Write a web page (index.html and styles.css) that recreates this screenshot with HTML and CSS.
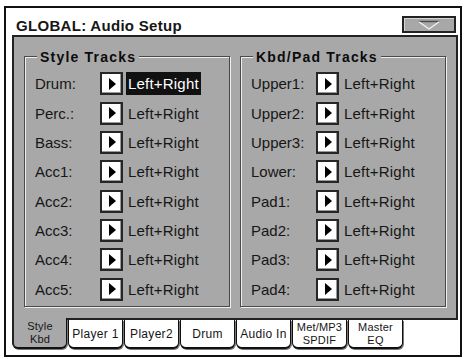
FILE: index.html
```html
<!DOCTYPE html>
<html lang="en">
<head>
  <meta charset="UTF-8">
  <title>GLOBAL: Audio Setup</title>
  <link rel="stylesheet" href="styles.css">
</head>
<body>

  <div class="screen">
    <div class="header">
      <div class="title">GLOBAL: Audio Setup</div>
      <div class="menu-btn">
        <svg width="24" height="10" viewBox="0 0 24 10">
          <path d="M1 1.5 L23 1.5" stroke="#4a4a4a" stroke-width="1.4" fill="none"/>
          <path d="M1.5 1.5 L12 9 L22.5 1.5" stroke="#f2f2f2" stroke-width="1.3" fill="none"/>
        </svg>
      </div>
    </div>

    <div class="panel">
      <div class="group">
        <div class="group-title">Style Tracks</div>
        <div class="row"><span class="label">Drum:</span><span class="arrow"></span><span class="value selected">Left+Right</span></div>
        <div class="row"><span class="label">Perc.:</span><span class="arrow"></span><span class="value">Left+Right</span></div>
        <div class="row"><span class="label">Bass:</span><span class="arrow"></span><span class="value">Left+Right</span></div>
        <div class="row"><span class="label">Acc1:</span><span class="arrow"></span><span class="value">Left+Right</span></div>
        <div class="row"><span class="label">Acc2:</span><span class="arrow"></span><span class="value">Left+Right</span></div>
        <div class="row"><span class="label">Acc3:</span><span class="arrow"></span><span class="value">Left+Right</span></div>
        <div class="row"><span class="label">Acc4:</span><span class="arrow"></span><span class="value">Left+Right</span></div>
        <div class="row"><span class="label">Acc5:</span><span class="arrow"></span><span class="value">Left+Right</span></div>
      </div>

      <div class="group">
        <div class="group-title">Kbd/Pad Tracks</div>
        <div class="row"><span class="label">Upper1:</span><span class="arrow"></span><span class="value">Left+Right</span></div>
        <div class="row"><span class="label">Upper2:</span><span class="arrow"></span><span class="value">Left+Right</span></div>
        <div class="row"><span class="label">Upper3:</span><span class="arrow"></span><span class="value">Left+Right</span></div>
        <div class="row"><span class="label">Lower:</span><span class="arrow"></span><span class="value">Left+Right</span></div>
        <div class="row"><span class="label">Pad1:</span><span class="arrow"></span><span class="value">Left+Right</span></div>
        <div class="row"><span class="label">Pad2:</span><span class="arrow"></span><span class="value">Left+Right</span></div>
        <div class="row"><span class="label">Pad3:</span><span class="arrow"></span><span class="value">Left+Right</span></div>
        <div class="row"><span class="label">Pad4:</span><span class="arrow"></span><span class="value">Left+Right</span></div>
      </div>
    </div>

    <div class="tabs">
      <div class="tab active two-line">Style<br>Kbd</div>
      <div class="tab-rest">
        <div class="tab">Player 1</div>
        <div class="tab">Player2</div>
        <div class="tab">Drum</div>
        <div class="tab">Audio In</div>
        <div class="tab two-line">Met/MP3<br>SPDIF</div>
        <div class="tab two-line">Master<br>EQ</div>
      </div>
    </div>
  </div>

</body>
</html>
```

FILE: styles.css
```css
body {
  margin: 0;
  background: #fff;
  font-family: "Liberation Sans", Arial, sans-serif;
  color: #161616;
}

.screen {
  margin: 6px 0 0 4px;
  width: 454px;
  height: 347px;
  border: 2px solid #111;
  display: flex;
  flex-direction: column;
}

.header {
  height: 27px;
  flex: none;
  display: flex;
  justify-content: space-between;
  align-items: flex-start;
  padding: 0 4px 0 10px;
}

.title {
  margin-top: 9px;
  font-size: 15px;
  line-height: 18px;
  font-weight: bold;
  letter-spacing: 0.3px;
}

.menu-btn {
  margin-top: 8px;
  width: 54px;
  height: 17px;
  box-sizing: border-box;
  border: 2px solid #222;
  background: #a8a8a8;
  box-shadow: inset 1px 1px 0 #d6d6d6;
  display: flex;
  align-items: center;
  justify-content: center;
}

.panel {
  flex: none;
  height: 283px;
  margin: 0 2px 0 6px;
  box-sizing: border-box;
  border: 2px solid #222;
  border-bottom: none;
  background: #a8a8a8;
  display: flex;
  gap: 10px;
  padding: 19px 10px 0;
}

.group {
  width: 206px;
  height: 251px;
  box-sizing: border-box;
  border: 1px solid #4a4a4a;
  box-shadow: inset 1px 1px 0 #eee, 1px 1px 0 #eee;
  padding-left: 10px;
}

.group-title {
  width: fit-content;
  margin: -10px 0 2px 2px;
  padding: 0 3px;
  height: 20px;
  line-height: 20px;
  background: #a8a8a8;
  color: #0c0c0c;
  font-size: 14px;
  font-weight: bold;
  letter-spacing: 1.2px;
}

.row {
  height: 29.35px;
  display: flex;
  align-items: center;
  font-size: 15px;
}

.label {
  width: 65px;
  flex: none;
}

.arrow {
  width: 23px;
  height: 23px;
  flex: none;
  box-sizing: border-box;
  border: 2px solid #262626;
  background: #fff;
  box-shadow: inset -1px -1px 0 #999;
  display: flex;
  align-items: center;
  justify-content: center;
}

.arrow::before {
  content: "";
  margin-left: 1px;
  border-left: 7px solid #000;
  border-top: 6px solid transparent;
  border-bottom: 6px solid transparent;
}

.value {
  margin-left: 3px;
  height: 23px;
  line-height: 23px;
  padding: 0 2px;
  letter-spacing: 0.2px;
}

.value.selected {
  background: #111;
  color: #fff;
}

.tabs {
  flex: none;
  height: 31px;
  margin: 0 2px 0 6px;
  display: flex;
}

.tab {
  width: 55px;
  flex: none;
  box-sizing: border-box;
  border: 1px solid #111;
  border-top: none;
  border-bottom-width: 2px;
  border-radius: 0 0 6px 6px;
  box-shadow: 1px 1px 0 #777;
  background: #fff;
  display: flex;
  align-items: center;
  justify-content: center;
  text-align: center;
  font-size: 12px;
  line-height: 14px;
  letter-spacing: 0.3px;
}

.tab.two-line {
  font-size: 11px;
  line-height: 13px;
  letter-spacing: 0.2px;
}

.tab.active {
  background: #a8a8a8;
  border-left: 2px solid #222;
}

.tab-rest {
  flex: 1;
  display: flex;
  gap: 1px;
  padding-left: 1px;
  border-top: 2px solid #222;
}
```
